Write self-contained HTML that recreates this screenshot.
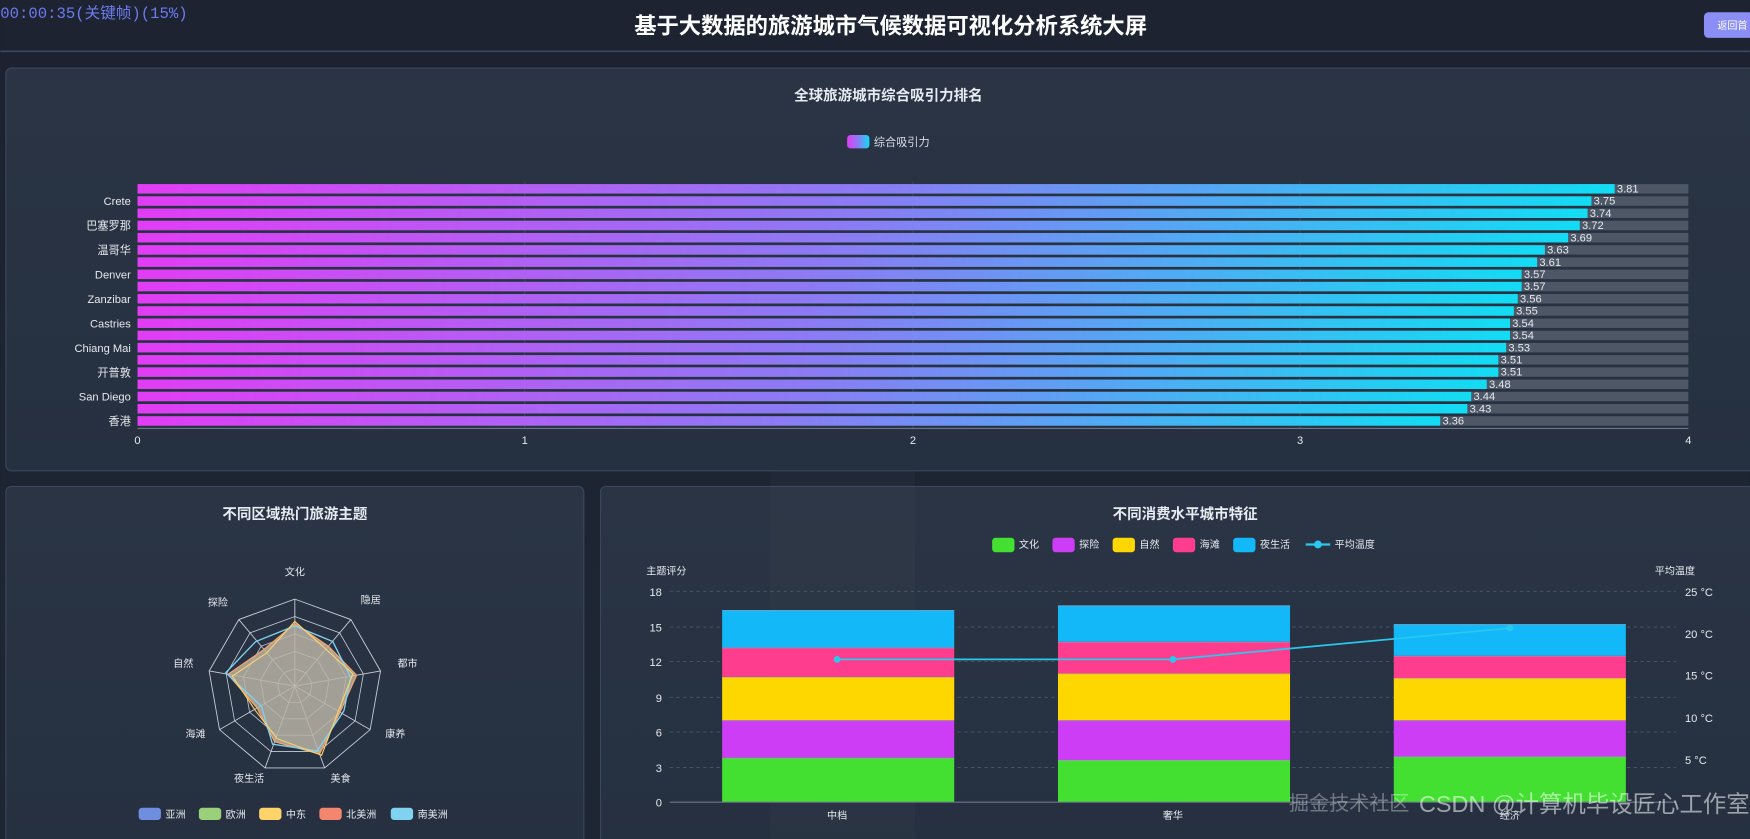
<!DOCTYPE html>
<html><head><meta charset="utf-8"><style>
html,body{margin:0;padding:0;background:#1a202c;width:1750px;height:839px;overflow:hidden}
svg{display:block;font-family:"Liberation Sans","Noto Sans CJK SC",sans-serif}
</style></head><body>
<svg width="1750" height="839" viewBox="0 0 1568 752" xmlns="http://www.w3.org/2000/svg">
<defs>
<linearGradient id="bg" x1="0" y1="0" x2="0" y2="1"><stop offset="0" stop-color="#1c2230"/><stop offset="1" stop-color="#1e2634"/></linearGradient>
<linearGradient id="pn" x1="0" y1="0" x2="0" y2="1"><stop offset="0" stop-color="#2a3444"/><stop offset="1" stop-color="#253040"/></linearGradient>
<linearGradient id="bar" x1="0" y1="0" x2="1" y2="0"><stop offset="0" stop-color="#e23cf5"/><stop offset="0.5" stop-color="#8a7cf4"/><stop offset="1" stop-color="#12dcf3"/></linearGradient>
</defs>
<rect width="1568" height="752" fill="url(#bg)"/>
<rect x="0" y="0" width="1568" height="46" fill="#1d2331"/>
<line x1="0" y1="46" x2="1568" y2="46" stroke="#3b4a60" stroke-width="1.5"/>
<text x="0" y="16" font-size="14" fill="#6c7cf0" font-family="Liberation Mono,monospace">00:00:35(关键帧)(15%)</text>
<text x="798" y="30" font-size="20" font-weight="bold" fill="#fff" text-anchor="middle">基于大数据的旅游城市气候数据可视化分析系统大屏</text>
<rect x="1527" y="11" width="50" height="23" rx="4" fill="#8a8ef5"/>
<text x="1539" y="26" font-size="9" fill="#fff">返回首</text>

<rect x="5" y="61" width="1570" height="361" rx="5" fill="url(#pn)" stroke="#3a475b"/>
<text x="796" y="90" font-size="13" font-weight="bold" fill="#e8ecf2" text-anchor="middle">全球旅游城市综合吸引力排名</text>
<rect x="759" y="121" width="20" height="12" rx="3" fill="url(#bar)"/>
<text x="783" y="131" font-size="10" fill="#d8dde5">综合吸引力</text>
<g stroke="#3a4658" stroke-width="1">
<line x1="470" y1="163" x2="470" y2="384"/><line x1="818" y1="163" x2="818" y2="384"/><line x1="1165" y1="163" x2="1165" y2="384"/>
</g>
<g id="bars"></g>
<line x1="123" y1="384" x2="1513" y2="384" stroke="#6b7688"/>
<g font-size="10" fill="#e6e9ee" text-anchor="middle">
<text x="123" y="398">0</text><text x="470" y="398">1</text><text x="818" y="398">2</text><text x="1165" y="398">3</text><text x="1513" y="398">4</text>
</g>

<rect x="5" y="436" width="518" height="330" rx="5" fill="url(#pn)" stroke="#3a475b"/>
<text x="264" y="465" font-size="13" font-weight="bold" fill="#e8ecf2" text-anchor="middle">不同区域热门旅游主题</text>
<g transform="translate(264,615)">
<g fill="none" stroke="#c8ced8" stroke-width="0.8">
<polygon points="0,-78 50.2,-59.7 76.8,-13.6 67.5,39 26.7,73.3 -26.7,73.3 -67.5,39 -76.8,-13.6 -50.2,-59.7"/>
<polygon transform="scale(0.8)" vector-effect="non-scaling-stroke" points="0,-78 50.2,-59.7 76.8,-13.6 67.5,39 26.7,73.3 -26.7,73.3 -67.5,39 -76.8,-13.6 -50.2,-59.7"/>
<polygon transform="scale(0.6)" vector-effect="non-scaling-stroke" points="0,-78 50.2,-59.7 76.8,-13.6 67.5,39 26.7,73.3 -26.7,73.3 -67.5,39 -76.8,-13.6 -50.2,-59.7"/>
<polygon transform="scale(0.4)" vector-effect="non-scaling-stroke" points="0,-78 50.2,-59.7 76.8,-13.6 67.5,39 26.7,73.3 -26.7,73.3 -67.5,39 -76.8,-13.6 -50.2,-59.7"/>
<polygon transform="scale(0.2)" vector-effect="non-scaling-stroke" points="0,-78 50.2,-59.7 76.8,-13.6 67.5,39 26.7,73.3 -26.7,73.3 -67.5,39 -76.8,-13.6 -50.2,-59.7"/>
<path d="M0,0L0,-78M0,0L50.2,-59.7M0,0L76.8,-13.6M0,0L67.5,39M0,0L26.7,73.3M0,0L-26.7,73.3M0,0L-67.5,39M0,0L-76.8,-13.6M0,0L-50.2,-59.7"/>
</g>
<polygon points="0,-56 30.1,-35.8 55.3,-9.8 40.5,23.4 22.1,60.8 -18.1,49.8 -33.8,19.5 -59.9,-10.6 -27.6,-32.9" fill="#b9b3a6" fill-opacity="0.85" stroke="#f4a36a" stroke-width="1.2"/>
<polygon points="0,-54 34,-40 50,-8 44,22 20,58 -20,52 -30,18 -62,-12 -35,-40" fill="none" stroke="#7fd2f0" stroke-width="1.2"/>
<polygon points="0,-58 28,-33 52,-11 38,25 24,62 -16,47 -36,21 -56,-9 -25,-30" fill="none" stroke="#fdd36a" stroke-width="1"/>
<g font-size="9" fill="#e6e9ee" text-anchor="middle">
<text x="0" y="-99">文化</text><text x="68" y="-74">隐居</text><text x="101" y="-17">都市</text><text x="90" y="46">康养</text><text x="41" y="86">美食</text><text x="-41" y="86">夜生活</text><text x="-89" y="46">海滩</text><text x="-100" y="-17">自然</text><text x="-69" y="-72">探险</text>
</g>
</g>
<g font-size="9" fill="#e6e9ee">
<rect x="124" y="724" width="20" height="11" rx="3" fill="#6f8ee0"/><text x="148" y="733">亚洲</text>
<rect x="178" y="724" width="20" height="11" rx="3" fill="#9ad07a"/><text x="202" y="733">欧洲</text>
<rect x="232" y="724" width="20" height="11" rx="3" fill="#fdd36a"/><text x="256" y="733">中东</text>
<rect x="286" y="724" width="20" height="11" rx="3" fill="#f4866f"/><text x="310" y="733">北美洲</text>
<rect x="350" y="724" width="20" height="11" rx="3" fill="#7fd2f0"/><text x="374" y="733">南美洲</text>
</g>

<rect x="538" y="436" width="1040" height="330" rx="5" fill="url(#pn)" stroke="#3a475b"/>
<rect x="690" y="422" width="130" height="330" fill="#ffffff" fill-opacity="0.02"/>
<text x="1062" y="465" font-size="13" font-weight="bold" fill="#e8ecf2" text-anchor="middle">不同消费水平城市特征</text>
<g font-size="9" fill="#e6e9ee">
<rect x="889" y="482" width="20" height="13" rx="3" fill="#43e032"/><text x="913" y="491">文化</text>
<rect x="943" y="482" width="20" height="13" rx="3" fill="#cc3df5"/><text x="967" y="491">探险</text>
<rect x="997" y="482" width="20" height="13" rx="3" fill="#ffd700"/><text x="1021" y="491">自然</text>
<rect x="1051" y="482" width="20" height="13" rx="3" fill="#ff3d8f"/><text x="1075" y="491">海滩</text>
<rect x="1105" y="482" width="20" height="13" rx="3" fill="#12b8f8"/><text x="1129" y="491">夜生活</text>
<line x1="1170" y1="488" x2="1192" y2="488" stroke="#2ac8ee" stroke-width="2"/><circle cx="1181" cy="488" r="3.5" fill="#2ac8ee"/><text x="1196" y="491">平均温度</text>
<text x="579" y="515">主题评分</text><text x="1483" y="515">平均温度</text>
</g>
<g stroke="#4b586b" stroke-dasharray="3,3" stroke-width="0.8">
<line x1="600" y1="530" x2="1502" y2="530"/><line x1="600" y1="562" x2="1502" y2="562"/><line x1="600" y1="593" x2="1502" y2="593"/><line x1="600" y1="625" x2="1502" y2="625"/><line x1="600" y1="656" x2="1502" y2="656"/><line x1="600" y1="688" x2="1502" y2="688"/>
</g>
<g font-size="10" fill="#e6e9ee" text-anchor="end">
<text x="593" y="534">18</text><text x="593" y="566">15</text><text x="593" y="597">12</text><text x="593" y="629">9</text><text x="593" y="660">6</text><text x="593" y="692">3</text><text x="593" y="723">0</text>
</g>
<g font-size="10" fill="#e6e9ee">
<text x="1510" y="534">25 °C</text><text x="1510" y="572">20 °C</text><text x="1510" y="609">15 °C</text><text x="1510" y="647">10 °C</text><text x="1510" y="685">5 °C</text>
</g>
<g id="stk"></g>
<line x1="600" y1="719" x2="1502" y2="719" stroke="#6b7688"/>
<polyline points="750,591 1051,591 1353,563" fill="none" stroke="#2ac8ee" stroke-width="1.5"/>
<circle cx="750" cy="591" r="3" fill="#2ac8ee"/><circle cx="1051" cy="591" r="3" fill="#2ac8ee"/><circle cx="1353" cy="563" r="3" fill="#2ac8ee"/>
<g font-size="9" fill="#e6e9ee" text-anchor="middle"><text x="750" y="734">中档</text><text x="1051" y="734">奢华</text><text x="1353" y="734">经济</text></g>
<text x="1568" y="728" font-size="21" fill="#ffffff" fill-opacity="0.55" text-anchor="end">CSDN @计算机毕设匠心工作室</text>
<text x="1155" y="726" font-size="18" fill="#ffffff" fill-opacity="0.35">掘金技术社区</text>
</svg>
<script>
var ns="http://www.w3.org/2000/svg";
function el(t,a,p,txt){var e=document.createElementNS(ns,t);for(var k in a)e.setAttribute(k,a[k]);if(txt)e.textContent=txt;p.appendChild(e);return e;}
var v=[3.81,3.75,3.74,3.72,3.69,3.63,3.61,3.57,3.57,3.56,3.55,3.54,3.54,3.53,3.51,3.51,3.48,3.44,3.43,3.36];
var lab={1:"Crete",3:"巴塞罗那",5:"温哥华",7:"Denver",9:"Zanzibar",11:"Castries",13:"Chiang Mai",15:"开普敦",17:"San Diego",19:"香港"};
var g=document.getElementById("bars");
for(var i=0;i<20;i++){var y=165+i*10.95;
el("rect",{x:123,y:y,width:1390,height:8.5,fill:"#4e5766"},g);
var w=v[i]*347.5;el("rect",{x:123,y:y,width:w,height:8.5,fill:"url(#bar)"},g);
el("text",{x:125+w,y:y+7.5,"font-size":10,fill:"#e6e9ee"},g,v[i].toFixed(2));
if(lab[i])el("text",{x:117,y:y+8,"font-size":10,fill:"#e6e9ee","text-anchor":"end"},g,lab[i]);}
var s=document.getElementById("stk");
var cols=["#43e032","#cc3df5","#ffd700","#ff3d8f","#12b8f8"];
var data=[[647,[3.8,7.0,10.7,13.2,16.4]],[948,[3.6,7.0,11.0,13.7,16.8]],[1249,[3.9,7.0,10.6,12.5,15.2]]];
data.forEach(function(d){var prev=0;d[1].forEach(function(c,j){var y1=719-prev*10.5,y2=719-c*10.5;
el("rect",{x:d[0],y:y2,width:208,height:y1-y2,fill:cols[j]},s);
el("line",{x1:d[0],x2:d[0]+208,y1:y2+0.5,y2:y2+0.5,stroke:"#9aa4b5","stroke-opacity":0.5},s);prev=c;});});
</script>
</body></html>
